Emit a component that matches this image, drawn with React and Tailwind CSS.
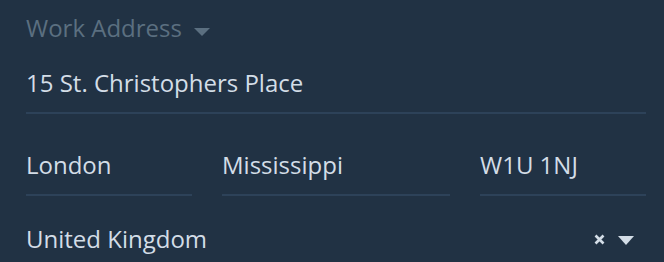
import React from 'react';

const Field = ({ value, className = '' }) => (
  <div className={`border-b-2 border-[#2d4259] ${className}`}>
    <div className="text-[24px] leading-[32px] text-[#d3dde7]">{value}</div>
  </div>
);

const App = () => {
  return (
    <div className="w-[664px] h-[262px] overflow-hidden bg-[#213244] pl-[26px] pr-[18px] pt-[12px]" style={{ fontFamily: '"Open Sans", "Noto Sans", sans-serif' }}>
      <div className="flex items-center gap-[12px] text-[24px] leading-[32px] text-[#5b6f80]">
        <span>Work Address</span>
        <svg width="16" height="8" viewBox="0 0 16 8" className="mt-[7px]">
          <polygon points="0,0 16,0 8,8" fill="#5b6f80" />
        </svg>
      </div>
      <Field value="15 St. Christophers Place" className="mt-[23px] pb-[13px]" />
      <div className="flex gap-[30px] mt-[35px]">
        <Field value="London" className="w-[166px] pb-[13px]" />
        <Field value="Mississippi" className="w-[228px] pb-[13px]" />
        <Field value="W1U 1NJ" className="w-[166px] pb-[13px]" />
      </div>
      <div className="flex items-center mt-[27px] border-b-2 border-[#2d4259] pb-[13px]">
        <div className="flex-1 text-[24px] leading-[32px] text-[#d3dde7]">United Kingdom</div>
        <div className="flex items-center gap-[13px] mr-[12px]">
          <svg width="11" height="11" viewBox="0 0 11 11">
            <path d="M1.5 1.5 L9.5 9.5 M9.5 1.5 L1.5 9.5" stroke="#d3dde7" strokeWidth="2.6" />
          </svg>
          <svg width="16" height="9" viewBox="0 0 16 9" className="mt-[2px]">
            <polygon points="0,0 16,0 8,9" fill="#d3dde7" />
          </svg>
        </div>
      </div>
    </div>
  );
};

export default App;
